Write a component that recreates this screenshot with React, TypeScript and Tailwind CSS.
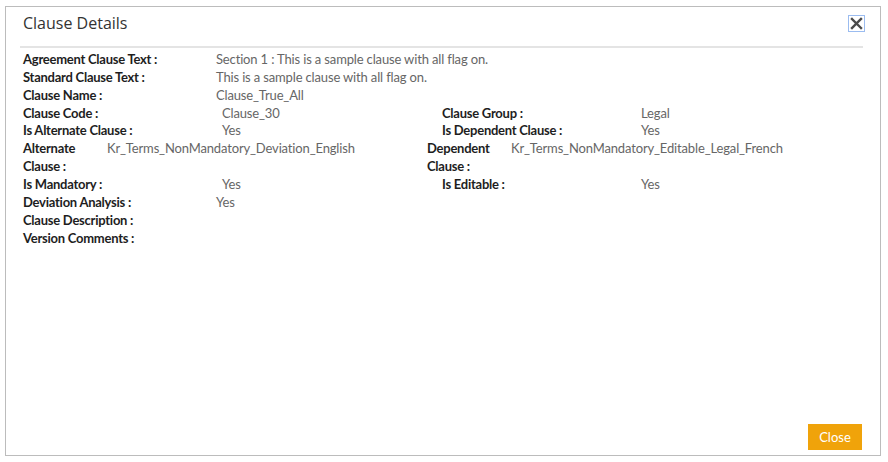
import React from 'react';

type Field = { label: string; value?: string };

const labelCls = 'font-bold tracking-[-0.25px] text-[#1e1e1e]';
const valueCls = 'tracking-[-0.15px] text-[#666]';

const SingleRow: React.FC<Field & { labelWidth?: string }> = ({ label, value, labelWidth = 'w-[193px]' }) => (
    <div className="flex h-[18px] items-center">
        <span className={`${labelWidth} shrink-0 ${labelCls}`}>{label}</span>
        <span className={valueCls}>{value}</span>
    </div>
);

const PairRow: React.FC<{ left: Field; right: Field }> = ({ left, right }) => (
    <div className="flex h-[18px] items-center">
        <div className="flex w-[419px] shrink-0">
            <span className={`w-[199px] shrink-0 ${labelCls}`}>{left.label}</span>
            <span className={valueCls}>{left.value}</span>
        </div>
        <div className="flex">
            <span className={`w-[199px] shrink-0 ${labelCls}`}>{right.label}</span>
            <span className={valueCls}>{right.value}</span>
        </div>
    </div>
);

const App: React.FC = () => {
    return (
        <div className="h-[462px] w-[888px] bg-white pl-[5px] pt-[6px] text-[13px] leading-[18px]" style={{ fontFamily: 'Lato, "Liberation Sans", sans-serif' }}>
            <div className="flex h-[450px] w-[876px] flex-col border border-[#bcbcbc] bg-white">
                {/* header */}
                <div className="flex items-start justify-between pl-[17px] pr-[15px] pt-[4px]">
                    <h2 className="text-[16px] leading-[24px] text-[#333]" style={{ fontFamily: '"Open Sans", sans-serif' }}>Clause Details</h2>
                    <button className="mt-[4px] flex h-[17px] w-[17px] items-center justify-center border border-[#9bbcf0] bg-white">
                        <svg width="13" height="13" viewBox="0 0 13 13">
                            <path d="M2 2 L11 11 M11 2 L2 11" stroke="#4a4a4a" strokeWidth="2.4" strokeLinecap="square" />
                        </svg>
                    </button>
                </div>
                <div className="ml-[14px] mr-[17px] mt-[11px] h-[2px] bg-[#e4e4e4]" />

                {/* fields */}
                <div className="flex flex-col pl-[17px] pt-[2px]">
                    <SingleRow label="Agreement Clause Text :" value="Section 1 : This is a sample clause with all flag on." />
                    <SingleRow label="Standard Clause Text :" value="This is a sample clause with all flag on." />
                    <SingleRow label="Clause Name :" value="Clause_True_All" />
                    <PairRow left={{ label: 'Clause Code :', value: 'Clause_30' }} right={{ label: 'Clause Group :', value: 'Legal' }} />
                    <div className="-mt-px" />
                    <PairRow left={{ label: 'Is Alternate Clause :', value: 'Yes' }} right={{ label: 'Is Dependent Clause :', value: 'Yes' }} />
                    <div className="flex h-[36px] items-start">
                        <div className="flex w-[404px] shrink-0">
                            <span className={`w-[84px] shrink-0 ${labelCls}`}>Alternate Clause :</span>
                            <span className={valueCls}>Kr_Terms_NonMandatory_Deviation_English</span>
                        </div>
                        <div className="flex">
                            <span className={`w-[84px] shrink-0 ${labelCls}`}>Dependent Clause :</span>
                            <span className={valueCls}>Kr_Terms_NonMandatory_Editable_Legal_French</span>
                        </div>
                    </div>
                    <PairRow left={{ label: 'Is Mandatory :', value: 'Yes' }} right={{ label: 'Is Editable :', value: 'Yes' }} />
                    <SingleRow label="Deviation Analysis :" value="Yes" />
                    <SingleRow label="Clause Description :" />
                    <SingleRow label="Version Comments :" />
                </div>

                {/* footer */}
                <div className="mt-auto flex justify-end pb-[5px] pr-[18px]">
                    <button className="h-[26px] w-[54px] bg-[#f0a30a] text-[13px] text-white">Close</button>
                </div>
            </div>
        </div>
    );
};

export default App;
